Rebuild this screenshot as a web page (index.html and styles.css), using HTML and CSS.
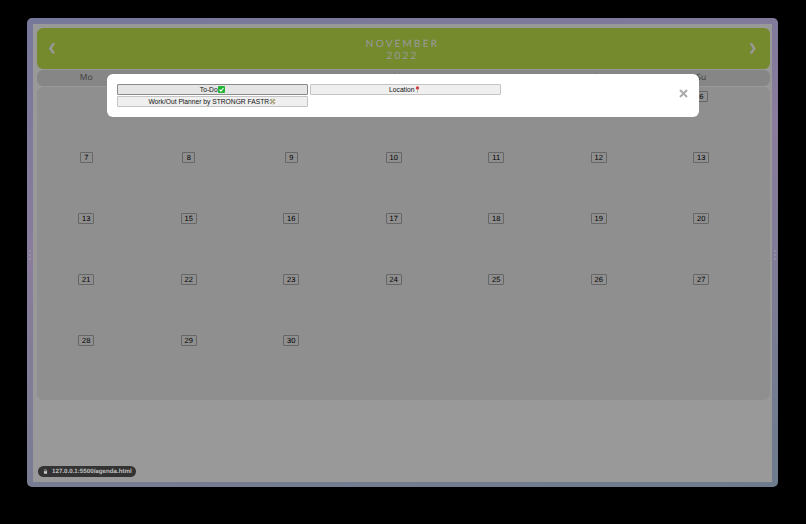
FILE: index.html
```html
<!DOCTYPE html>
<html lang="en">
<head>
    <meta charset="UTF-8">
    <meta name="viewport" content="width=device-width, initial-scale=1.0">
    <title>Agenda</title>
    <link rel="stylesheet" href="styles.css">
</head>
<body>
    <div class="window">
        <span class="grip grip-left"></span>
        <span class="grip grip-right"></span>
        <div class="page">
            <header class="month">
                <span class="arrow">&#10094;</span>
                <div class="month-name">NOVEMBER<br>2022</div>
                <span class="arrow">&#10095;</span>
            </header>
            <ul class="weekdays">
                <li>Mo</li><li>Tu</li><li>We</li><li>Th</li><li>Fr</li><li>Sa</li><li>Su</li>
            </ul>
            <ul class="days">
                <li></li><li></li><li></li><li></li><li></li><li></li><li><span>6</span></li>
                <li><span>7</span></li><li><span>8</span></li><li><span>9</span></li><li><span>10</span></li><li><span>11</span></li><li><span>12</span></li><li><span>13</span></li>
                <li><span>13</span></li><li><span>15</span></li><li><span>16</span></li><li><span>17</span></li><li><span>18</span></li><li><span>19</span></li><li><span>20</span></li>
                <li><span>21</span></li><li><span>22</span></li><li><span>23</span></li><li><span>24</span></li><li><span>25</span></li><li><span>26</span></li><li><span>27</span></li>
                <li><span>28</span></li><li><span>29</span></li><li><span>30</span></li>
            </ul>

            <div class="overlay"></div>

            <div class="modal">
                <div class="modal-buttons">
                    <button type="button" class="active">To-Do<svg class="emoji" viewBox="0 0 10 10"><rect width="10" height="10" rx="1.5" fill="#22b534"/><path d="M2.2 5.2l2 2.2 3.6-4.6" fill="none" stroke="#fff" stroke-width="1.5"/></svg></button>
                    <button type="button">Location<svg class="emoji" viewBox="0 0 10 10"><circle cx="5" cy="2.8" r="2.4" fill="#d93a3a"/><path d="M5 4v6" stroke="#a8a8a8" stroke-width="1"/></svg></button>
                    <button type="button">Work/Out Planner by STRONGR FASTR<svg class="emoji" viewBox="0 0 10 10"><path d="M2 2l6 6M8 2L2 8" stroke="#a39a68" stroke-width="1.6"/><path d="M1 4l3-3M6 1l3 3M1 6l3 3M9 6L6 9" stroke="#6f6a4a" stroke-width=".8"/></svg></button>
                </div>
                <svg class="close" viewBox="0 0 9 9"><path d="M1 1l7 7M8 1L1 8" stroke="#aaa" stroke-width="2"/></svg>
            </div>

            <div class="status">
                <svg class="status-lock" viewBox="0 0 8 8"><rect x="1.5" y="3.5" width="5" height="4" fill="#ccc"/><path d="M2.6 3.5V2a1.4 1.4 0 0 1 2.8 0v1.5" fill="none" stroke="#ccc"/></svg>
                127.0.0.1:5500/agenda.html
            </div>
        </div>
    </div>
</body>
</html>
```

FILE: styles.css
```css
* {
    box-sizing: border-box;
}
body {
    margin: 0;
    height: 524px;
    overflow: hidden;
    background-color: #000;
    font-family: "Liberation Sans", Arial, sans-serif;
    text-rendering: geometricPrecision;
}
.window {
    position: relative;
    width: 751px;
    height: 469px;
    margin: 18px 0 0 27px;
    padding: 6px 6px 5px 6px;
    border-radius: 5px;
    background: linear-gradient(170deg, #76789a 0%, #8a7c9c 40%, #6d7c8d 100%);
}
.grip {
    position: absolute;
    top: 232px;
    width: 2px;
    height: 12px;
    background: repeating-linear-gradient(#aaa 0, #aaa 2px, transparent 2px, transparent 4px);
    opacity: 0.4;
}
.grip-left {
    left: 2px;
}
.grip-right {
    right: 2px;
}
.page {
    position: relative;
    height: 100%;
    padding: 4px 2px 0 4px;
    background-color: #fff;
    overflow: hidden;
}
.month {
    display: flex;
    align-items: center;
    justify-content: space-between;
    height: 41px;
    padding: 0 13px 0 11px;
    border-radius: 6px;
    background-color: #c2e64b;
    color: #fff;
}
.arrow {
    font-size: 10px;
    font-weight: bold;
}
.month-name {
    padding-top: 2px;
    font-family: Lato, sans-serif;
    font-size: 10px;
    line-height: 12px;
    letter-spacing: 2.2px;
    text-align: center;
}
.weekdays {
    display: grid;
    grid-template-columns: 100.5px repeat(6, 102.5px);
    height: 16px;
    margin: 1px 0 0;
    padding: 0;
    border-radius: 6px;
    list-style: none;
    background-color: #dfdfdf;
    font-family: "Open Sans", sans-serif;
    font-size: 8.5px;
    line-height: 16px;
    text-align: center;
    color: #666;
}
.weekdays li:first-child {
    padding-right: 2px;
}
.days {
    display: grid;
    grid-template-columns: 100.5px repeat(6, 102.5px);
    grid-auto-rows: 61px;
    height: 313px;
    margin: 1px 0 0;
    padding: 0;
    border-radius: 6px;
    list-style: none;
    background-color: #eee;
}
.days li {
    display: flex;
    justify-content: center;
    align-items: center;
    height: 19px;
}
.days li:nth-child(7n+1) {
    padding-right: 2px;
}
.days span {
    min-width: 13px;
    height: 11px;
    padding: 0 3px;
    border: 1px solid #aaa;
    border-radius: 1px;
    font-size: 7.5px;
    line-height: 9px;
    text-align: center;
    color: #000;
    background-color: #eee;
}
.overlay {
    position: absolute;
    inset: 0;
    background-color: rgba(0, 0, 0, 0.4);
}
.modal {
    position: absolute;
    top: 50px;
    left: 74px;
    display: flex;
    justify-content: space-between;
    width: 592px;
    height: 43px;
    padding: 10px 11.5px 0 10px;
    border-radius: 6px;
    background-color: #fff;
}
.modal-buttons {
    display: flex;
    flex-wrap: wrap;
    align-content: flex-start;
    gap: 1px 2.5px;
    width: 400px;
}
.modal-buttons button {
    display: flex;
    align-items: center;
    justify-content: center;
    width: 190.5px;
    height: 11px;
    padding: 0;
    border: 1px solid #c4c4c4;
    border-radius: 1px;
    background-color: #efefef;
    font-family: "Liberation Sans", Arial, sans-serif;
    font-size: 6.7px;
    color: #111;
}
.modal-buttons button.active {
    border-color: #8a8a8a;
    background-color: #e5e5e5;
}
.emoji {
    width: 7px;
    height: 7px;
}
.close {
    width: 9px;
    height: 9px;
    margin-top: 4.5px;
}
.status {
    position: absolute;
    left: 5px;
    bottom: 5px;
    display: flex;
    align-items: center;
    gap: 4px;
    height: 11px;
    padding: 0 4px 0 5px;
    border-radius: 6px;
    background-color: #333;
    font-size: 6.2px;
    font-weight: bold;
    color: #c0c0c0;
}
.status-lock {
    width: 5px;
    height: 5px;
}
```
